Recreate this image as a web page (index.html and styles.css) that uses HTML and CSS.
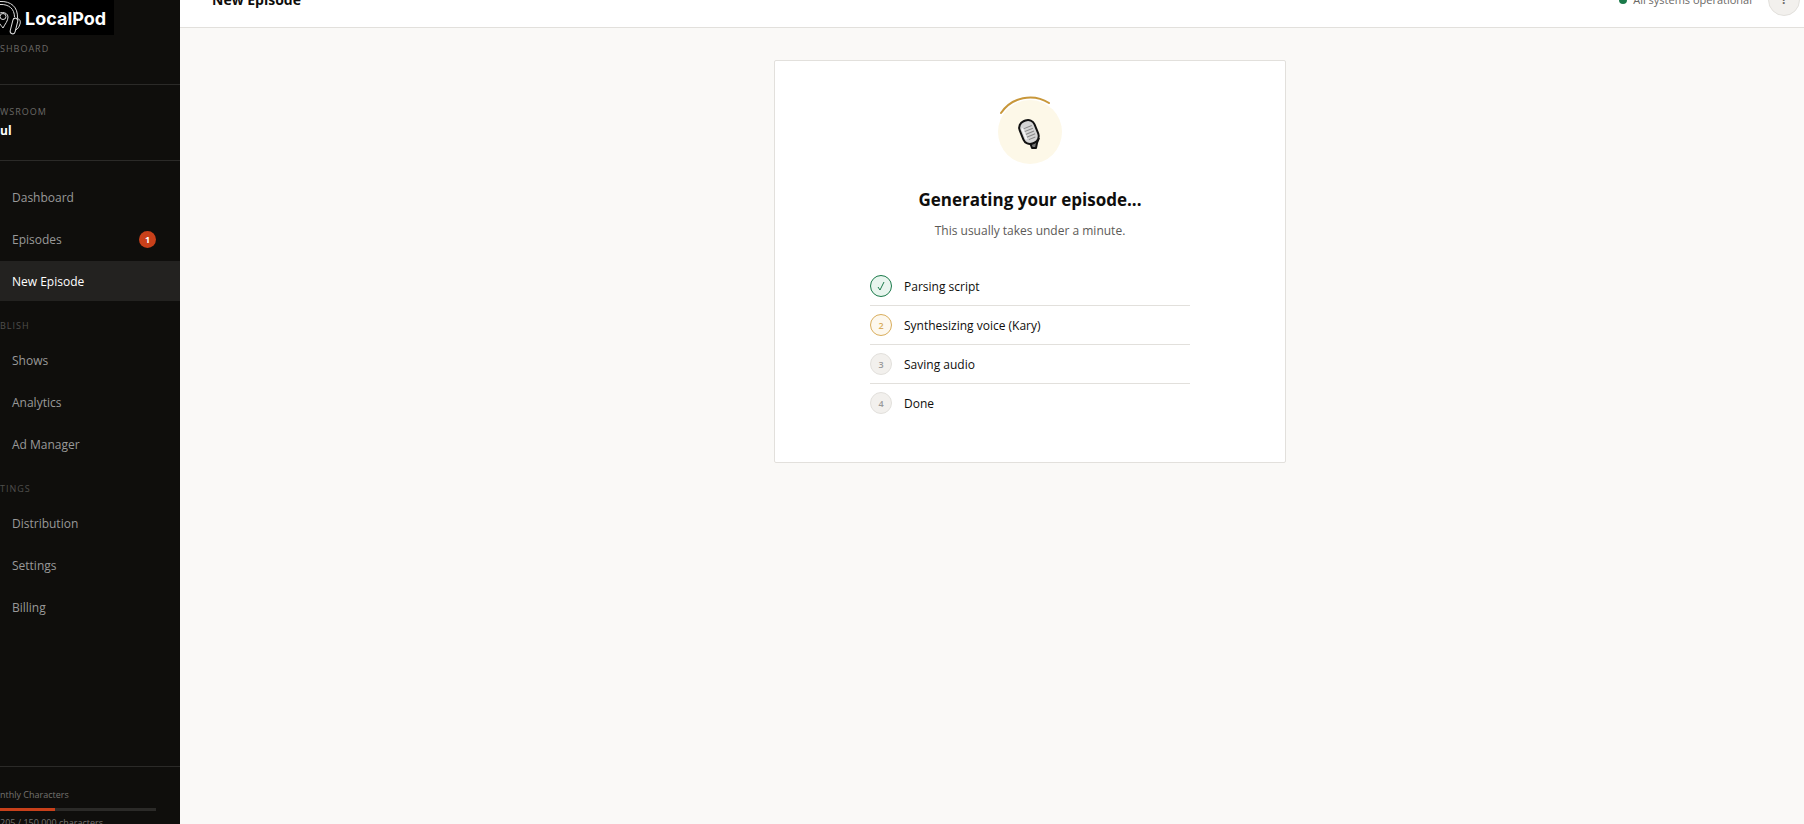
FILE: index.html
```html
<!DOCTYPE html>
<html lang="en">

<head>
    <meta charset="UTF-8">
    <meta name="viewport" content="width=device-width, initial-scale=1.0">
    <title>LocalPod - New Episode</title>

    <link rel="stylesheet" href="styles.css">
</head>

<body>

    <aside class="sidebar">
        <div class="brand">
            <div class="logo">
                <svg width="22" height="35" viewBox="0 0 22 35" fill="none" stroke="#ddd" stroke-width="1">
                    <path d="M0 1.500C11 1 18 7 17.500 18M0 4.500C9 4 14.500 9 14.500 17" />
                    <rect x="11.500" y="18" width="5" height="16" rx="2.500" transform="rotate(14 14 26)" />
                    <path d="M16.500 19c3-1 4.500 2 3.500 5c-1 3-2 5-4.500 6" />
                    <path d="M-3 17c0-6 11-6 11 0c0 4-3 7-5 11c-3-4-6-7-6-11z" />
                    <circle cx="3" cy="16.500" r="3" />
                </svg>
                <span>LocalPod</span>
            </div>
            <div class="caption">SHBOARD</div>
        </div>

        <div class="newsroom">
            <div class="caption">WSROOM</div>
            <div class="newsroom-name">ul</div>
        </div>

        <nav class="nav">
            <a href="#">Dashboard</a>
            <a href="#">Episodes <span class="badge">1</span></a>
            <a href="#" class="active">New Episode</a>
            <div class="section">BLISH</div>
            <a href="#">Shows</a>
            <a href="#">Analytics</a>
            <a href="#">Ad Manager</a>
            <div class="section">TINGS</div>
            <a href="#">Distribution</a>
            <a href="#">Settings</a>
            <a href="#">Billing</a>
        </nav>

        <div class="usage">
            <div>nthly Characters</div>
            <div class="usage-bar">
                <div class="usage-fill"></div>
            </div>
            <div>205 / 150,000 characters</div>
        </div>
    </aside>

    <div class="main">
        <header class="topbar">
            <h1>New Episode</h1>
            <div class="status"><span class="dot"></span>All systems operational</div>
            <button class="help" type="button">?</button>
        </header>

        <main class="content">
            <section class="card">
                <svg class="spinner" width="72" height="72" viewBox="0 0 72 72" fill="none">
                    <circle cx="36" cy="36" r="32" fill="#fdf8e8" />
                    <path d="M7 17A35 35 0 0 1 55 7" stroke="#c8973a" stroke-width="2" stroke-linecap="round" />
                    <path d="M35 44l3 8h4l1-5 2-5" fill="#777" stroke="#111" stroke-width="2" stroke-linejoin="round" />
                    <g transform="rotate(-22 35 36)">
                        <rect x="27" y="24" width="16" height="24" rx="7" fill="#d4d4d4" stroke="#111" stroke-width="2" />
                        <path d="M31 31h9M31 34h9M31 37h9M31 40h9M32 43h7" stroke="#888" stroke-width="1" />
                        <path d="M30 30v12" stroke="#f4f4f4" stroke-width="2" />
                    </g>
                </svg>
                <h2>Generating your episode...</h2>
                <p>This usually takes under a minute.</p>

                <ol class="steps">
                    <li class="done">
                        <span class="step">
                            <svg width="8" height="10" viewBox="0 0 8 10" fill="none" stroke="#1a7a4a" stroke-width="1">
                                <path d="M1 6l2 3 4-8" />
                            </svg>
                        </span>
                        Parsing script
                    </li>
                    <li class="current"><span class="step">2</span>Synthesizing voice (Kary)</li>
                    <li><span class="step">3</span>Saving audio</li>
                    <li><span class="step">4</span>Done</li>
                </ol>
            </section>
        </main>
    </div>

</body>

</html>
```
FILE: styles.css
```css
* {
    box-sizing: border-box;
}

body {
    margin: 0;
    height: 100vh;
    display: flex;
    overflow: hidden;
    font-family: "Open Sans", "Noto Sans", sans-serif;
    font-size: 12px;
    line-height: 21px;
    color: #0f0e0c;
    background-color: #faf9f7;
}

/* sidebar */
.sidebar {
    width: 180px;
    flex-shrink: 0;
    display: flex;
    flex-direction: column;
    background-color: #0f0e0c;
    color: #999;
}

.brand {
    height: 85px;
    border-bottom: 1px solid #2b2a28;
}

.logo {
    width: 114px;
    height: 35px;
    padding-top: 2px;
    display: flex;
    align-items: center;
    gap: 3px;
    background-color: #000;
    color: #fff;
    font-family: Inter, sans-serif;
    font-size: 18px;
    font-weight: 700;
}

.logo svg {
    margin-top: -2px;
}

.caption {
    font-size: 9px;
    letter-spacing: 1px;
    line-height: 16px;
    color: #6b6966;
}

.brand .caption {
    margin-top: 6px;
}

.newsroom {
    height: 76px;
    padding-top: 19px;
    border-bottom: 1px solid #2b2a28;
}

.newsroom-name {
    font-weight: 700;
    color: #fff;
}

.nav {
    flex: 1;
    padding-top: 16px;
}

.nav a {
    height: 40px;
    margin-bottom: 2px;
    padding: 1px 24px 0 12px;
    display: flex;
    align-items: center;
    justify-content: space-between;
    color: #999;
    text-decoration: none;
}

.nav a.active {
    background-color: #232220;
    color: #fff;
}

.badge {
    width: 17px;
    height: 17px;
    border-radius: 50%;
    background-color: #c8401a;
    color: #fff;
    font-size: 9px;
    font-weight: 700;
    line-height: 17px;
    text-align: center;
}

.section {
    height: 37px;
    padding-top: 15px;
    font-size: 9px;
    letter-spacing: 1px;
    line-height: 16px;
    color: #4f4e4c;
}

.usage {
    height: 58px;
    padding: 20px 24px 0 0;
    border-top: 1px solid #2b2a28;
    font-size: 9px;
    line-height: 16px;
    white-space: nowrap;
    color: #757370;
}

.usage-bar {
    height: 3px;
    margin: 5px 0 4px;
    background-color: #2b2a28;
}

.usage-fill {
    width: 35%;
    height: 3px;
    background-color: #c8401a;
}

/* top bar */
.main {
    flex: 1;
}

.topbar {
    height: 56px;
    margin-top: -28px;
    padding: 0 4px 0 32px;
    display: flex;
    align-items: center;
    background-color: #fff;
    border-bottom: 1px solid #e2e0dc;
}

.topbar h1 {
    flex: 1;
    margin: 0;
    font-size: 14px;
    font-weight: 700;
}

.status {
    display: flex;
    align-items: center;
    gap: 6px;
    margin-right: 16px;
    font-size: 11px;
    line-height: 22px;
    color: #6b6966;
}

.dot {
    width: 8px;
    height: 8px;
    border-radius: 50%;
    background-color: #1a7a4a;
}

.help {
    width: 32px;
    height: 32px;
    padding: 0;
    border: 1px solid #e2e0dc;
    border-radius: 50%;
    background-color: #f2f0ed;
    color: #6b6966;
    font-family: inherit;
    font-size: 12px;
    font-weight: 700;
}

/* generating card */
.content {
    padding: 32px 0 32px 76px;
}

.card {
    max-width: 512px;
    margin: 0 auto;
    padding: 35px 95px 40px;
    background-color: #fff;
    border: 1px solid #e2e0dc;
    border-radius: 2px;
    text-align: center;
}

.spinner {
    display: block;
    margin: 0 auto 20px;
}

.card h2 {
    margin: 0 0 8px;
    font-size: 17px;
    font-weight: 700;
    line-height: 24px;
}

.card p {
    margin: 0 0 26px;
    color: #5c5a57;
}

.steps {
    margin: 0;
    padding: 0;
    list-style: none;
}

.steps li {
    display: flex;
    align-items: center;
    gap: 12px;
    padding: 8px 0;
    border-bottom: 1px solid #e2e0dc;
}

.steps li:last-child {
    border-bottom: none;
}

.step {
    width: 22px;
    height: 22px;
    display: flex;
    align-items: center;
    justify-content: center;
    border: 1px solid #e2e0dc;
    border-radius: 50%;
    background-color: #f2f0ed;
    color: #999;
    font-size: 9px;
    font-weight: 600;
}

.done .step {
    border-color: #1a7a4a;
    background-color: #e8f5ee;
}

.current .step {
    border-color: #d9ad5c;
    background-color: #fdf8ee;
    color: #d9ad5c;
}
```
